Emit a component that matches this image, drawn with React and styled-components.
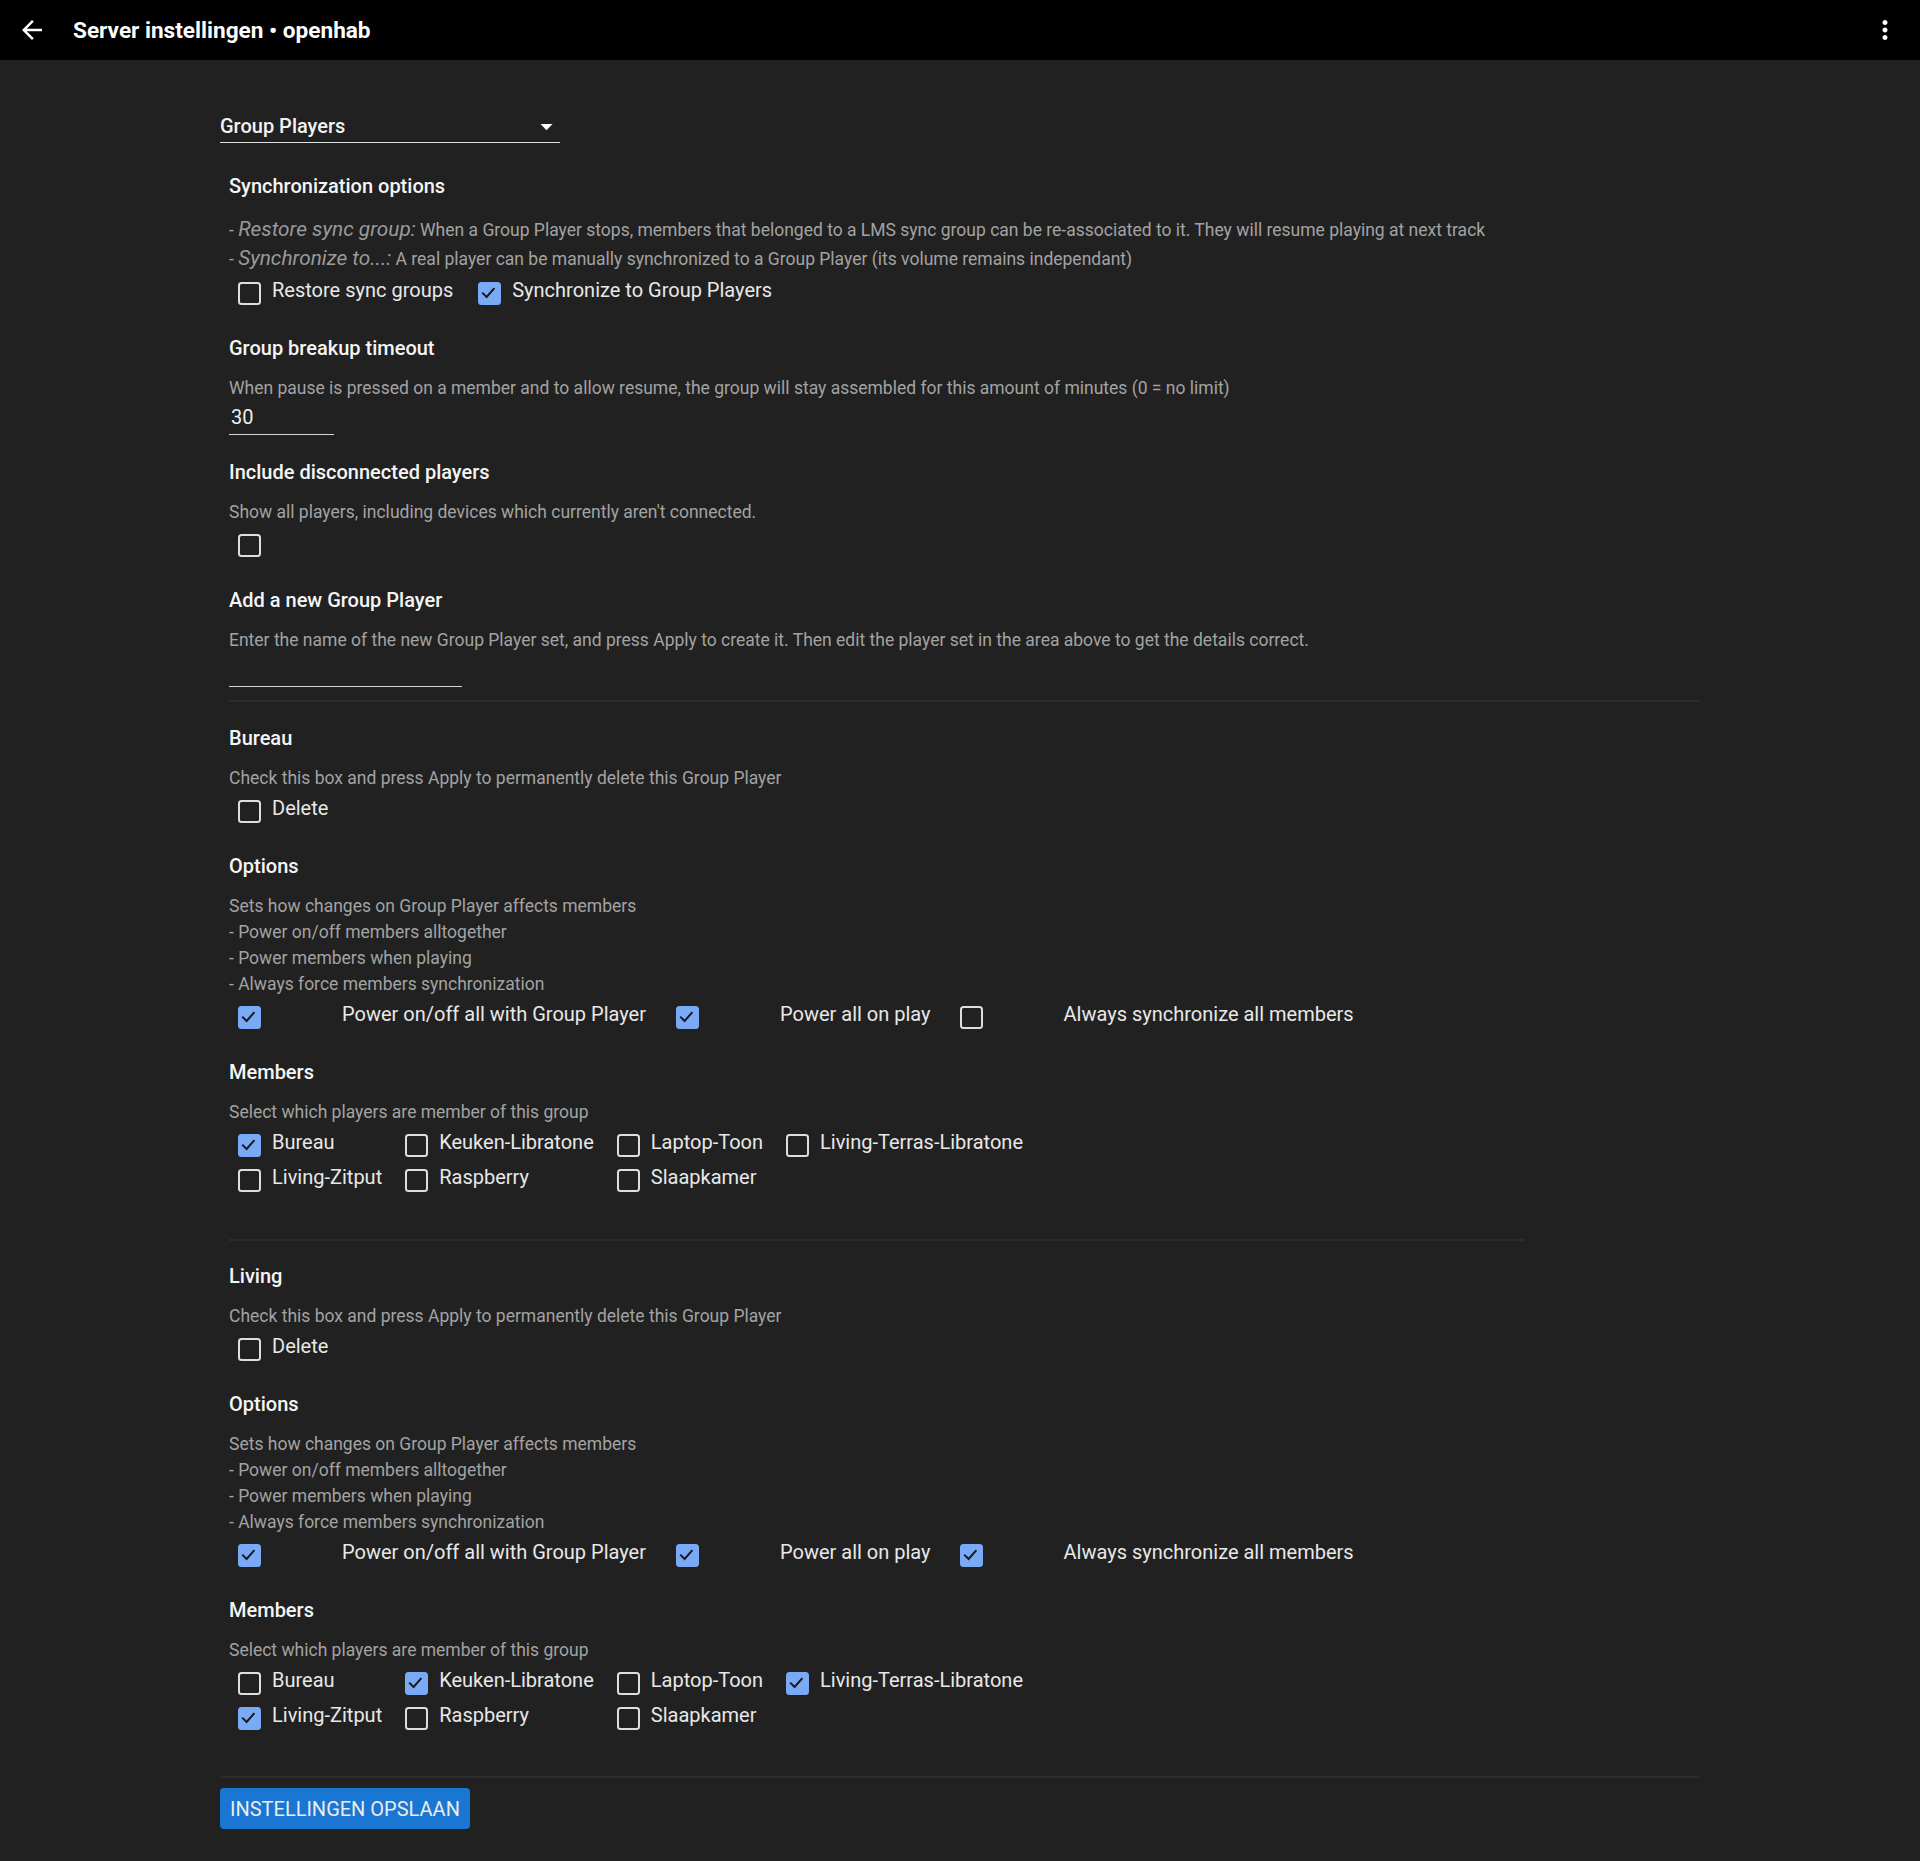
import React from "react";
import styled, { createGlobalStyle } from "styled-components";

const Global = createGlobalStyle`
  html, body { margin: 0; padding: 0; background: #212121; }
  body { font-family: Roboto, "Noto Sans", sans-serif; color: #e8e8e8; }
  * { box-sizing: border-box; }
`;

const Page = styled.div`
  min-height: 1861px;
  background: #212121;
`;

const TopBar = styled.header`
  height: 60px;
  background: #000;
  display: flex;
  align-items: center;
  padding: 0 20px 0 17px;
`;

const BarIcon = styled.svg`
  width: 30px;
  height: 30px;
  fill: #fff;
  flex: none;
`;

const Title = styled.h1`
  margin: 0 0 0 26px;
  font-size: 22.6px;
  font-weight: 700;
  color: #fff;
  flex: 1;
`;

const Main = styled.main`
  width: 1700px;
  padding: 50px 0 32px 220px;
`;

const Select = styled.div`
  width: 340px;
  height: 33px;
  border-bottom: 1px solid #e0e0e0;
  display: flex;
  align-items: center;
  justify-content: space-between;
  font-size: 20px;
  font-weight: 500;
  color: #f2f2f2;
`;

const Caret = styled.svg`
  width: 29px;
  height: 29px;
  fill: #fff;
  margin-right: -1px;
`;

const Settings = styled.div`
  padding-left: 9px;
  margin-top: 31px;
`;

const Setting = styled.section`
  margin-bottom: ${(p) => p.$gap ?? 29}px;
`;

const Heading = styled.h3`
  margin: 0 0 15px;
  font-size: 20px;
  line-height: 24px;
  font-weight: 500;
  color: #f5f5f5;
`;

const Desc = styled.div`
  font-size: 17.5px;
  line-height: ${(p) => p.$lh ?? 26}px;
  padding-top: ${(p) => p.$pt ?? 0}px;
  color: #a3a3a3;
`;

const Em = styled.em`
  font-size: 20.8px;
  color: #9a9a9a;
`;

const Row = styled.div`
  display: flex;
  align-items: flex-start;
  height: 34px;
  gap: ${(p) => p.$gap ?? 25}px;
  margin-left: 9px;
`;

const Item = styled.label`
  display: flex;
  align-items: flex-start;
  gap: ${(p) => p.$gap ?? 11}px;
  margin-right: ${(p) => p.$after ?? 0}px;
`;

const Label = styled.span`
  font-size: 20px;
  line-height: 34px;
  color: #e8e8e8;
  white-space: nowrap;
`;

const Box = styled.span`
  width: 23px;
  height: 23px;
  margin-top: 9px;
  flex: none;
  border-radius: 3.5px;
  border: 2.4px solid ${(p) => (p.$on ? "#7aa9f6" : "#dedede")};
  background: ${(p) => (p.$on ? "#7aa9f6" : "transparent")};
  display: flex;
  align-items: center;
  justify-content: center;
`;

const Tick = styled.svg`
  width: 23px;
  height: 23px;
  flex: none;
`;

const MemberGrid = styled.div`
  display: grid;
  grid-template-columns: repeat(4, max-content);
  grid-auto-rows: 35px;
  column-gap: 23px;
  margin-left: 9px;
`;

const TextInput = styled.div`
  width: ${(p) => p.$w}px;
  height: 34px;
  border-bottom: 1px solid #d6d6d6;
  padding-left: 2px;
  font-size: 20px;
  line-height: 33px;
  color: #eeeeee;
`;

const Rule = styled.hr`
  border: none;
  height: 2px;
  background: #2c2c2c;
  margin: ${(p) => p.$m};
  width: ${(p) => p.$w}px;
`;

const SaveButton = styled.button`
  height: 41px;
  padding: 0 10px;
  border: none;
  border-radius: 4px;
  background: #1976d2;
  color: #ececec;
  font-family: Roboto, sans-serif;
  font-size: 20px;
  font-weight: 400;
  cursor: pointer;
`;

function Check({ on }) {
  return (
    <Box $on={on}>
      {on && (
        <Tick viewBox="0 0 23 23">
          <path d="M4.2 10.6 L8.6 15 L16.4 6.2" fill="none" stroke="#1a1a1a" strokeWidth="2" />
        </Tick>
      )}
    </Box>
  );
}

function CheckItem({ on, label, after, gap }) {
  return (
    <Item $after={after} $gap={gap}>
      <Check on={on} />
      {label && <Label>{label}</Label>}
    </Item>
  );
}

const members = [
  "Bureau",
  "Keuken-Libratone",
  "Laptop-Toon",
  "Living-Terras-Libratone",
  "Living-Zitput",
  "Raspberry",
  "Slaapkamer",
];

function GroupPlayer({ name, options, selected }) {
  return (
    <>
      <Setting>
        <Heading>{name}</Heading>
        <Desc>Check this box and press Apply to permanently delete this Group Player</Desc>
        <Row>
          <CheckItem label="Delete" />
        </Row>
      </Setting>
      <Setting>
        <Heading>Options</Heading>
        <Desc>
          Sets how changes on Group Player affects members
          <br />- Power on/off members alltogether
          <br />- Power members when playing
          <br />- Always force members synchronization
        </Desc>
        <Row $gap={0}>
          <CheckItem on={options[0]} label="Power on/off all with Group Player" gap={81} after={30} />
          <CheckItem on={options[1]} label="Power all on play" gap={81} after={29} />
          <CheckItem on={options[2]} label="Always synchronize all members" gap={81} />
        </Row>
      </Setting>
      <Setting $gap={0}>
        <Heading>Members</Heading>
        <Desc>Select which players are member of this group</Desc>
        <MemberGrid>
          {members.map((m) => (
            <CheckItem key={m} on={selected.includes(m)} label={m} />
          ))}
        </MemberGrid>
      </Setting>
    </>
  );
}

export default function App() {
  return (
    <Page>
      <Global />
      <TopBar>
        <BarIcon viewBox="0 0 24 24">
          <path d="M20 11H7.83l5.59-5.59L12 4l-8 8 8 8 1.41-1.41L7.83 13H20v-2z" />
        </BarIcon>
        <Title>Server instellingen • openhab</Title>
        <BarIcon viewBox="0 0 24 24">
          <path d="M12 8c1.1 0 2-.9 2-2s-.9-2-2-2-2 .9-2 2 .9 2 2 2zm0 2c-1.1 0-2 .9-2 2s.9 2 2 2 2-.9 2-2-.9-2-2-2zm0 6c-1.1 0-2 .9-2 2s.9 2 2 2 2-.9 2-2-.9-2-2-2z" />
        </BarIcon>
      </TopBar>
      <Main>
        <Select>
          Group Players
          <Caret viewBox="0 0 24 24">
            <path d="M7 10l5 5 5-5z" />
          </Caret>
        </Select>
        <Settings>
          <Setting>
            <Heading>Synchronization options</Heading>
            <Desc $lh={29} $pt={2}>
              - <Em>Restore sync group:</Em> When a Group Player stops, members that belonged to a LMS sync
              group can be re-associated to it. They will resume playing at next track
            </Desc>
            <Desc $lh={27}>
              - <Em>Synchronize to...:</Em> A real player can be manually synchronized to a Group Player (its
              volume remains independant)
            </Desc>
            <Row>
              <CheckItem label="Restore sync groups" />
              <CheckItem on label="Synchronize to Group Players" />
            </Row>
          </Setting>
          <Setting $gap={25}>
            <Heading>Group breakup timeout</Heading>
            <Desc>
              When pause is pressed on a member and to allow resume, the group will stay assembled for this
              amount of minutes (0 = no limit)
            </Desc>
            <TextInput $w={105}>30</TextInput>
          </Setting>
          <Setting>
            <Heading>Include disconnected players</Heading>
            <Desc>Show all players, including devices which currently aren't connected.</Desc>
            <Row>
              <CheckItem />
            </Row>
          </Setting>
          <Setting $gap={0}>
            <Heading>Add a new Group Player</Heading>
            <Desc>
              Enter the name of the new Group Player set, and press Apply to create it. Then edit the player
              set in the area above to get the details correct.
            </Desc>
            <TextInput $w={233} />
          </Setting>
          <Rule $w={1471} $m="13px 0 24px" />
          <GroupPlayer name="Bureau" options={[true, true, false]} selected={["Bureau"]} />
          <Rule $w={1295} $m="44px 0 23px" />
          <GroupPlayer
            name="Living"
            options={[true, true, true]}
            selected={["Keuken-Libratone", "Living-Terras-Libratone", "Living-Zitput"]}
          />
        </Settings>
        <Rule $w={1480} $m="43px 0 10px" />
        <SaveButton>INSTELLINGEN OPSLAAN</SaveButton>
      </Main>
    </Page>
  );
}
